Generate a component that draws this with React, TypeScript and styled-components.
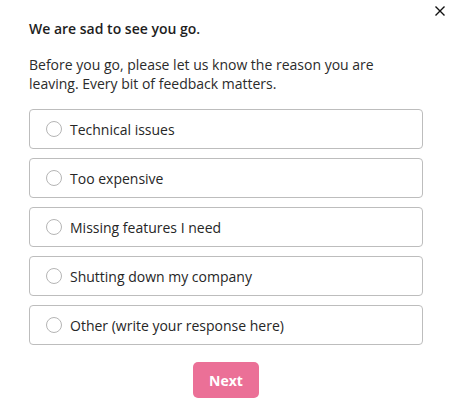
import styled, { createGlobalStyle } from "styled-components";
import { useState } from "react";

const GlobalStyle = createGlobalStyle`
  html, body {
    margin: 0;
    padding: 0;
    background: #ffffff;
  }
  body {
    font-family: "Open Sans", "Liberation Sans", sans-serif;
    color: #262626;
  }
`;

const reasons = [
  "Technical issues",
  "Too expensive",
  "Missing features I need",
  "Shutting down my company",
  "Other (write your response here)",
];

export default function App() {
  const [selected, setSelected] = useState<number | null>(null);

  return (
    <>
      <GlobalStyle />
      <Modal>
        <CloseButton aria-label="Close">
          <svg width="10" height="10" viewBox="0 0 10 10">
            <path d="M0.5 0.5 L9.5 9.5 M9.5 0.5 L0.5 9.5" stroke="#111" strokeWidth="1.4" />
          </svg>
        </CloseButton>
        <Title>We are sad to see you go.</Title>
        <Description>
          Before you go, please let us know the reason you are leaving. Every bit of feedback
          matters.
        </Description>
        <Options>
          {reasons.map((reason, i) => (
            <Option key={reason} onClick={() => setSelected(i)}>
              <Radio $checked={selected === i} />
              <OptionLabel>{reason}</OptionLabel>
            </Option>
          ))}
        </Options>
        <Footer>
          <NextButton>Next</NextButton>
        </Footer>
      </Modal>
    </>
  );
}

const Modal = styled.div`
  position: relative;
  width: 452px;
  height: 420px;
  box-sizing: border-box;
  padding: 19px 29px 0 29px;
  display: flex;
  flex-direction: column;
  background: #fff;
`;

const CloseButton = styled.button`
  position: absolute;
  top: 6px;
  right: 7px;
  width: 10px;
  height: 10px;
  padding: 0;
  border: none;
  background: none;
  display: flex;
  cursor: pointer;
`;

const Title = styled.div`
  font-size: 14px;
  line-height: 20px;
  font-weight: 600;
  color: #1e1e1e;
`;

const Description = styled.p`
  margin: 16px 0 0 0;
  font-size: 14px;
  line-height: 19px;
  color: #2b2b2b;
`;

const Options = styled.div`
  margin-top: 16px;
  display: flex;
  flex-direction: column;
  gap: 9px;
`;

const Option = styled.label`
  height: 40px;
  box-sizing: border-box;
  border: 1px solid #bdbdbd;
  border-radius: 4px;
  display: flex;
  align-items: center;
  gap: 8px;
  padding-left: 16px;
  cursor: pointer;
`;

const Radio = styled.span<{ $checked: boolean }>`
  width: 16px;
  height: 16px;
  box-sizing: border-box;
  border-radius: 50%;
  border: 1px solid #b5b5b5;
  background: ${(p) => (p.$checked ? "radial-gradient(#eb7097 40%, #fff 45%)" : "#fff")};
`;

const OptionLabel = styled.span`
  font-size: 14px;
  color: #262626;
`;

const Footer = styled.div`
  margin-top: 17px;
  display: flex;
  justify-content: center;
`;

const NextButton = styled.button`
  width: 66px;
  height: 36px;
  border: none;
  border-radius: 5px;
  background: #eb7097;
  color: #fff;
  font-family: "Open Sans", "Liberation Sans", sans-serif;
  font-size: 14px;
  font-weight: 700;
  cursor: pointer;
`;
